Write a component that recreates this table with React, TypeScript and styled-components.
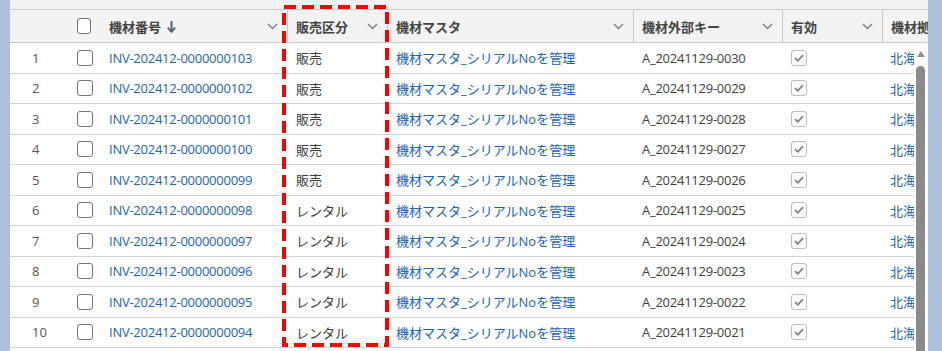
import React from 'react';
import styled, {createGlobalStyle} from 'styled-components';

const COLS = `58px 32px 187px 100px 246px 149px 100px 150px`;

const rows = [
  {no: 1, id: `0000000103`, kind: `販売`, key: `0030`},
  {no: 2, id: `0000000102`, kind: `販売`, key: `0029`},
  {no: 3, id: `0000000101`, kind: `販売`, key: `0028`},
  {no: 4, id: `0000000100`, kind: `販売`, key: `0027`},
  {no: 5, id: `0000000099`, kind: `販売`, key: `0026`},
  {no: 6, id: `0000000098`, kind: `レンタル`, key: `0025`},
  {no: 7, id: `0000000097`, kind: `レンタル`, key: `0024`},
  {no: 8, id: `0000000096`, kind: `レンタル`, key: `0023`},
  {no: 9, id: `0000000095`, kind: `レンタル`, key: `0022`},
  {no: 10, id: `0000000094`, kind: `レンタル`, key: `0021`},
  {no: 11, id: `0000000093`, kind: `レンタル`, key: `0020`},
];

const GlobalStyle = createGlobalStyle`
  html, body {
    margin: 0;
    padding: 0;
    overflow: hidden;
    background: #adc1dc;
  }
  body {
    font-family: "Open Sans", "Noto Sans CJK JP", sans-serif;
    font-size: 13px;
    color: #3e3e3c;
  }
`;

const Page = styled.div`
  position: relative;
  display: flex;
  height: 351px;
  padding-left: 10px;
`;

const Panel = styled.div`
  display: flex;
  flex-direction: column;
  width: 918px;
  height: 100%;
  background: #fff;
  overflow: hidden;
`;

const TopStrip = styled.div`
  flex: none;
  height: 9px;
  background: #f3f3f3;
  border-bottom: 1px solid #c9c9c9;
`;

const HeaderRow = styled.div`
  flex: none;
  display: grid;
  grid-template-columns: ${COLS};
  height: 33px;
  box-sizing: border-box;
  background: #f3f3f3;
  border-bottom: 1px solid #c9c9c9;
`;

const HeadCell = styled.div<{divider?: boolean}>`
  display: flex;
  align-items: center;
  min-width: 0;
  padding: 0 9px 0 8px;
  border-left: 1px solid ${({divider}) => divider ? `#c9c9c9` : `transparent`};
  font-weight: 700;
  color: #444;
  white-space: nowrap;
  overflow: hidden;
`;

const HeadLabel = styled.span`
  display: flex;
  align-items: center;
  gap: 6px;
  flex: 1;
`;

const Body = styled.div`
  display: flex;
  flex: 1;
  min-height: 0;
`;

const Rows = styled.div`
  width: 904px;
  overflow: hidden;
`;

const Row = styled.div`
  display: grid;
  grid-template-columns: ${COLS};
  height: 30.5px;
  box-sizing: border-box;
  border-bottom: 1px solid #d4d4d4;
`;

const Cell = styled.div<{pad?: number}>`
  display: flex;
  align-items: center;
  min-width: 0;
  padding-left: ${({pad}) => pad ?? 9}px;
  white-space: nowrap;
  overflow: hidden;
`;

const Latin = styled.span`
  letter-spacing: -0.25px;
`;

const RowNo = styled(Cell)`
  color: #555;
`;

const Link = styled.a`
  color: #1a63b5;
  text-decoration: none;
`;

const Box = styled.span`
  display: inline-block;
  width: 16px;
  height: 16px;
  box-sizing: border-box;
  border: 1px solid #747474;
  border-radius: 3px;
  background: #fff;
`;

const CheckedBox = styled.span`
  display: inline-flex;
  align-items: center;
  justify-content: center;
  width: 16px;
  height: 16px;
  box-sizing: border-box;
  border: 1px solid #bdbdbd;
  border-radius: 3px;
  background: #fafafa;
`;

const Scrollbar = styled.div`
  position: relative;
  flex: none;
  width: 14px;
`;

const UpArrow = styled.div`
  width: 0;
  height: 0;
  margin: 8px 0 0 3px;
  border-left: 4px solid transparent;
  border-right: 4px solid transparent;
  border-bottom: 6px solid #8e8e8e;
`;

const Thumb = styled.div`
  position: absolute;
  top: 23px;
  bottom: -10px;
  left: 2px;
  width: 9px;
  border-radius: 5px;
  background: #8b8b8b;
`;

const Highlight = styled.svg`
  position: absolute;
  left: 282px;
  top: 5px;
  pointer-events: none;
`;

const Chevron = () => (
  <svg width="11" height="7" viewBox="0 0 11 7">
    <path d="M1 1 L5.5 5.5 L10 1" fill="none" stroke="#7a7a7a" strokeWidth="1.3"/>
  </svg>
);

const SortDown = () => (
  <svg width="9" height="13" viewBox="0 0 9 13">
    <path d="M4.5 1 V11.5" stroke="#4d5c7d" strokeWidth="2"/>
    <path d="M0.8 7.6 L4.5 11.8 L8.2 7.6" fill="none" stroke="#4d5c7d" strokeWidth="1.8"/>
  </svg>
);

const Tick = () => (
  <svg width="10" height="8" viewBox="0 0 10 8">
    <path d="M1 4.2 L3.8 6.8 L9 1.2" fill="none" stroke="#7f7f7f" strokeWidth="1.7"/>
  </svg>
);

const App = () => {
  return (
    <Page>
      <GlobalStyle/>
      <Panel>
        <TopStrip/>
        <HeaderRow>
          <HeadCell/>
          <HeadCell><Box/></HeadCell>
          <HeadCell><HeadLabel>機材番号 <SortDown/></HeadLabel><Chevron/></HeadCell>
          <HeadCell divider><HeadLabel>販売区分</HeadLabel><Chevron/></HeadCell>
          <HeadCell divider><HeadLabel>機材マスタ</HeadLabel><Chevron/></HeadCell>
          <HeadCell divider><HeadLabel>機材外部キー</HeadLabel><Chevron/></HeadCell>
          <HeadCell divider><HeadLabel>有効</HeadLabel><Chevron/></HeadCell>
          <HeadCell divider><HeadLabel>機材拠点</HeadLabel></HeadCell>
        </HeaderRow>
        <Body>
          <Rows>
            {
              rows.map((r) => {
                return (
                  <Row key={r.no}>
                    <RowNo pad={22}>{r.no}</RowNo>
                    <Cell><Box/></Cell>
                    <Cell><Link href="#"><Latin>INV-202412-{r.id}</Latin></Link></Cell>
                    <Cell>{r.kind}</Cell>
                    <Cell><Link href="#">機材マスタ_シリアルNoを管理</Link></Cell>
                    <Cell><Latin>A_20241129-{r.key}</Latin></Cell>
                    <Cell><CheckedBox><Tick/></CheckedBox></Cell>
                    <Cell pad={8}><Link href="#">北海道倉庫</Link></Cell>
                  </Row>
                );
              })
            }
          </Rows>
          <Scrollbar>
            <UpArrow/>
            <Thumb/>
          </Scrollbar>
        </Body>
      </Panel>
      <Highlight width="107" height="342" viewBox="0 0 107 342">
        <rect x="2" y="2" width="103" height="338" fill="none" stroke="#f00" strokeWidth="4" strokeDasharray="12 6"/>
      </Highlight>
    </Page>
  );
};

export default App;
